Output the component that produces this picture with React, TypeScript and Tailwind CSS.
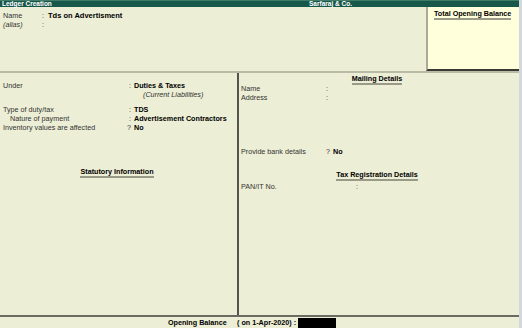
import React from "react";

const font = { fontFamily: '"Liberation Sans", Arial, sans-serif' };

export default function App() {
  return (
    <div
      className="w-[522px] h-[328px] flex bg-[#d3d8de] overflow-hidden text-[7.2px] leading-[9px] text-[#333]"
      style={font}
    >
      <div className="w-[519px] h-full flex flex-col bg-[#eceed5]">
        {/* title bar */}
        <div className="h-[7px] flex items-center bg-[#17584a] border-t border-[#3f7c68] text-white font-bold text-[6.5px] leading-[6px]">
          <div className="w-[309px] pl-[2px]">Ledger Creation</div>
          <div>Sarfaraj &amp; Co.</div>
        </div>
        {/* top section */}
        <div className="h-[64px] flex">
          <div className="flex-1 pt-[4px]">
            <div className="flex">
              <span className="w-[42px] pl-[3px]">Name</span>
              <span className="w-[6px]">:</span>
              <span className="font-bold text-black text-[7.5px]">Tds on Advertisment</span>
            </div>
            <div className="flex">
              <span className="w-[42px] pl-[3px] italic">(alias)</span>
              <span className="w-[6px]">:</span>
            </div>
          </div>
          <div className="w-[93px] bg-[#ffffdb] border-l-2 border-[#a9ab98] border-b-2 border-b-[#3a3a34] pt-[2px] pl-[6px]">
            <span className="font-bold text-black border-b-2 border-[#9a9a88] leading-[8px] inline-block">
              Total Opening Balance
            </span>
          </div>
        </div>
        <div className="h-[2px] bg-[#b9bba7]" />
        {/* middle */}
        <div className="h-[242px] flex">
          <div className="w-[239px] border-r-2 border-[#55554d] pt-[8px]">
            <div className="flex">
              <span className="w-[129px] pl-[3px]">Under</span>
              <span className="w-[5px]">:</span>
              <span className="font-bold text-black">Duties &amp; Taxes</span>
            </div>
            <div className="flex">
              <span className="w-[143px]" />
              <span className="italic">(Current Liabilities)</span>
            </div>
            <div className="flex mt-[6px]">
              <span className="w-[129px] pl-[3px]">Type of duty/tax</span>
              <span className="w-[5px]">:</span>
              <span className="font-bold text-black">TDS</span>
            </div>
            <div className="flex">
              <span className="w-[129px] pl-[10px]">Nature of payment</span>
              <span className="w-[5px]">:</span>
              <span className="font-bold text-black">Advertisement Contractors</span>
            </div>
            <div className="flex">
              <span className="w-[127px] pl-[3px]">Inventory values are affected</span>
              <span className="w-[7px]">?</span>
              <span className="font-bold text-black">No</span>
            </div>
            <div className="mt-[36px] flex justify-center pr-[3px]">
              <span className="font-bold text-black border-b-2 border-[#9a9a88] leading-[8px]">
                Statutory Information
              </span>
            </div>
          </div>
          <div className="flex-1 pt-[2px] leading-[8.5px]">
            <div className="flex justify-center pr-[4px]">
              <span className="font-bold text-black border-b-2 border-[#9a9a88] leading-[8px]">
                Mailing Details
              </span>
            </div>
            <div className="flex">
              <span className="w-[87px] pl-[2px]">Name</span>
              <span>:</span>
            </div>
            <div className="flex">
              <span className="w-[87px] pl-[2px]">Address</span>
              <span>:</span>
            </div>
            <div className="flex mt-[46px]">
              <span className="w-[87px] pl-[2px]">Provide bank details</span>
              <span className="w-[7px]">?</span>
              <span className="font-bold text-black">No</span>
            </div>
            <div className="flex justify-center mt-[14px] pr-[4px]">
              <span className="font-bold text-black border-b-2 border-[#9a9a88] leading-[8px]">
                Tax Registration Details
              </span>
            </div>
            <div className="flex mt-[2px]">
              <span className="w-[117px] pl-[2px]">PAN/IT No.</span>
              <span>:</span>
            </div>
          </div>
        </div>
        <div className="h-[2px] bg-[#6b6b62]" />
        {/* footer */}
        <div className="flex-1 flex items-center pl-[168px]">
          <span className="font-bold text-black w-[69px]">Opening Balance</span>
          <span className="font-bold text-black">( on 1-Apr-2020) :</span>
          <span className="ml-[2px] w-[38px] h-[10px] bg-black" />
        </div>
      </div>
    </div>
  );
}
